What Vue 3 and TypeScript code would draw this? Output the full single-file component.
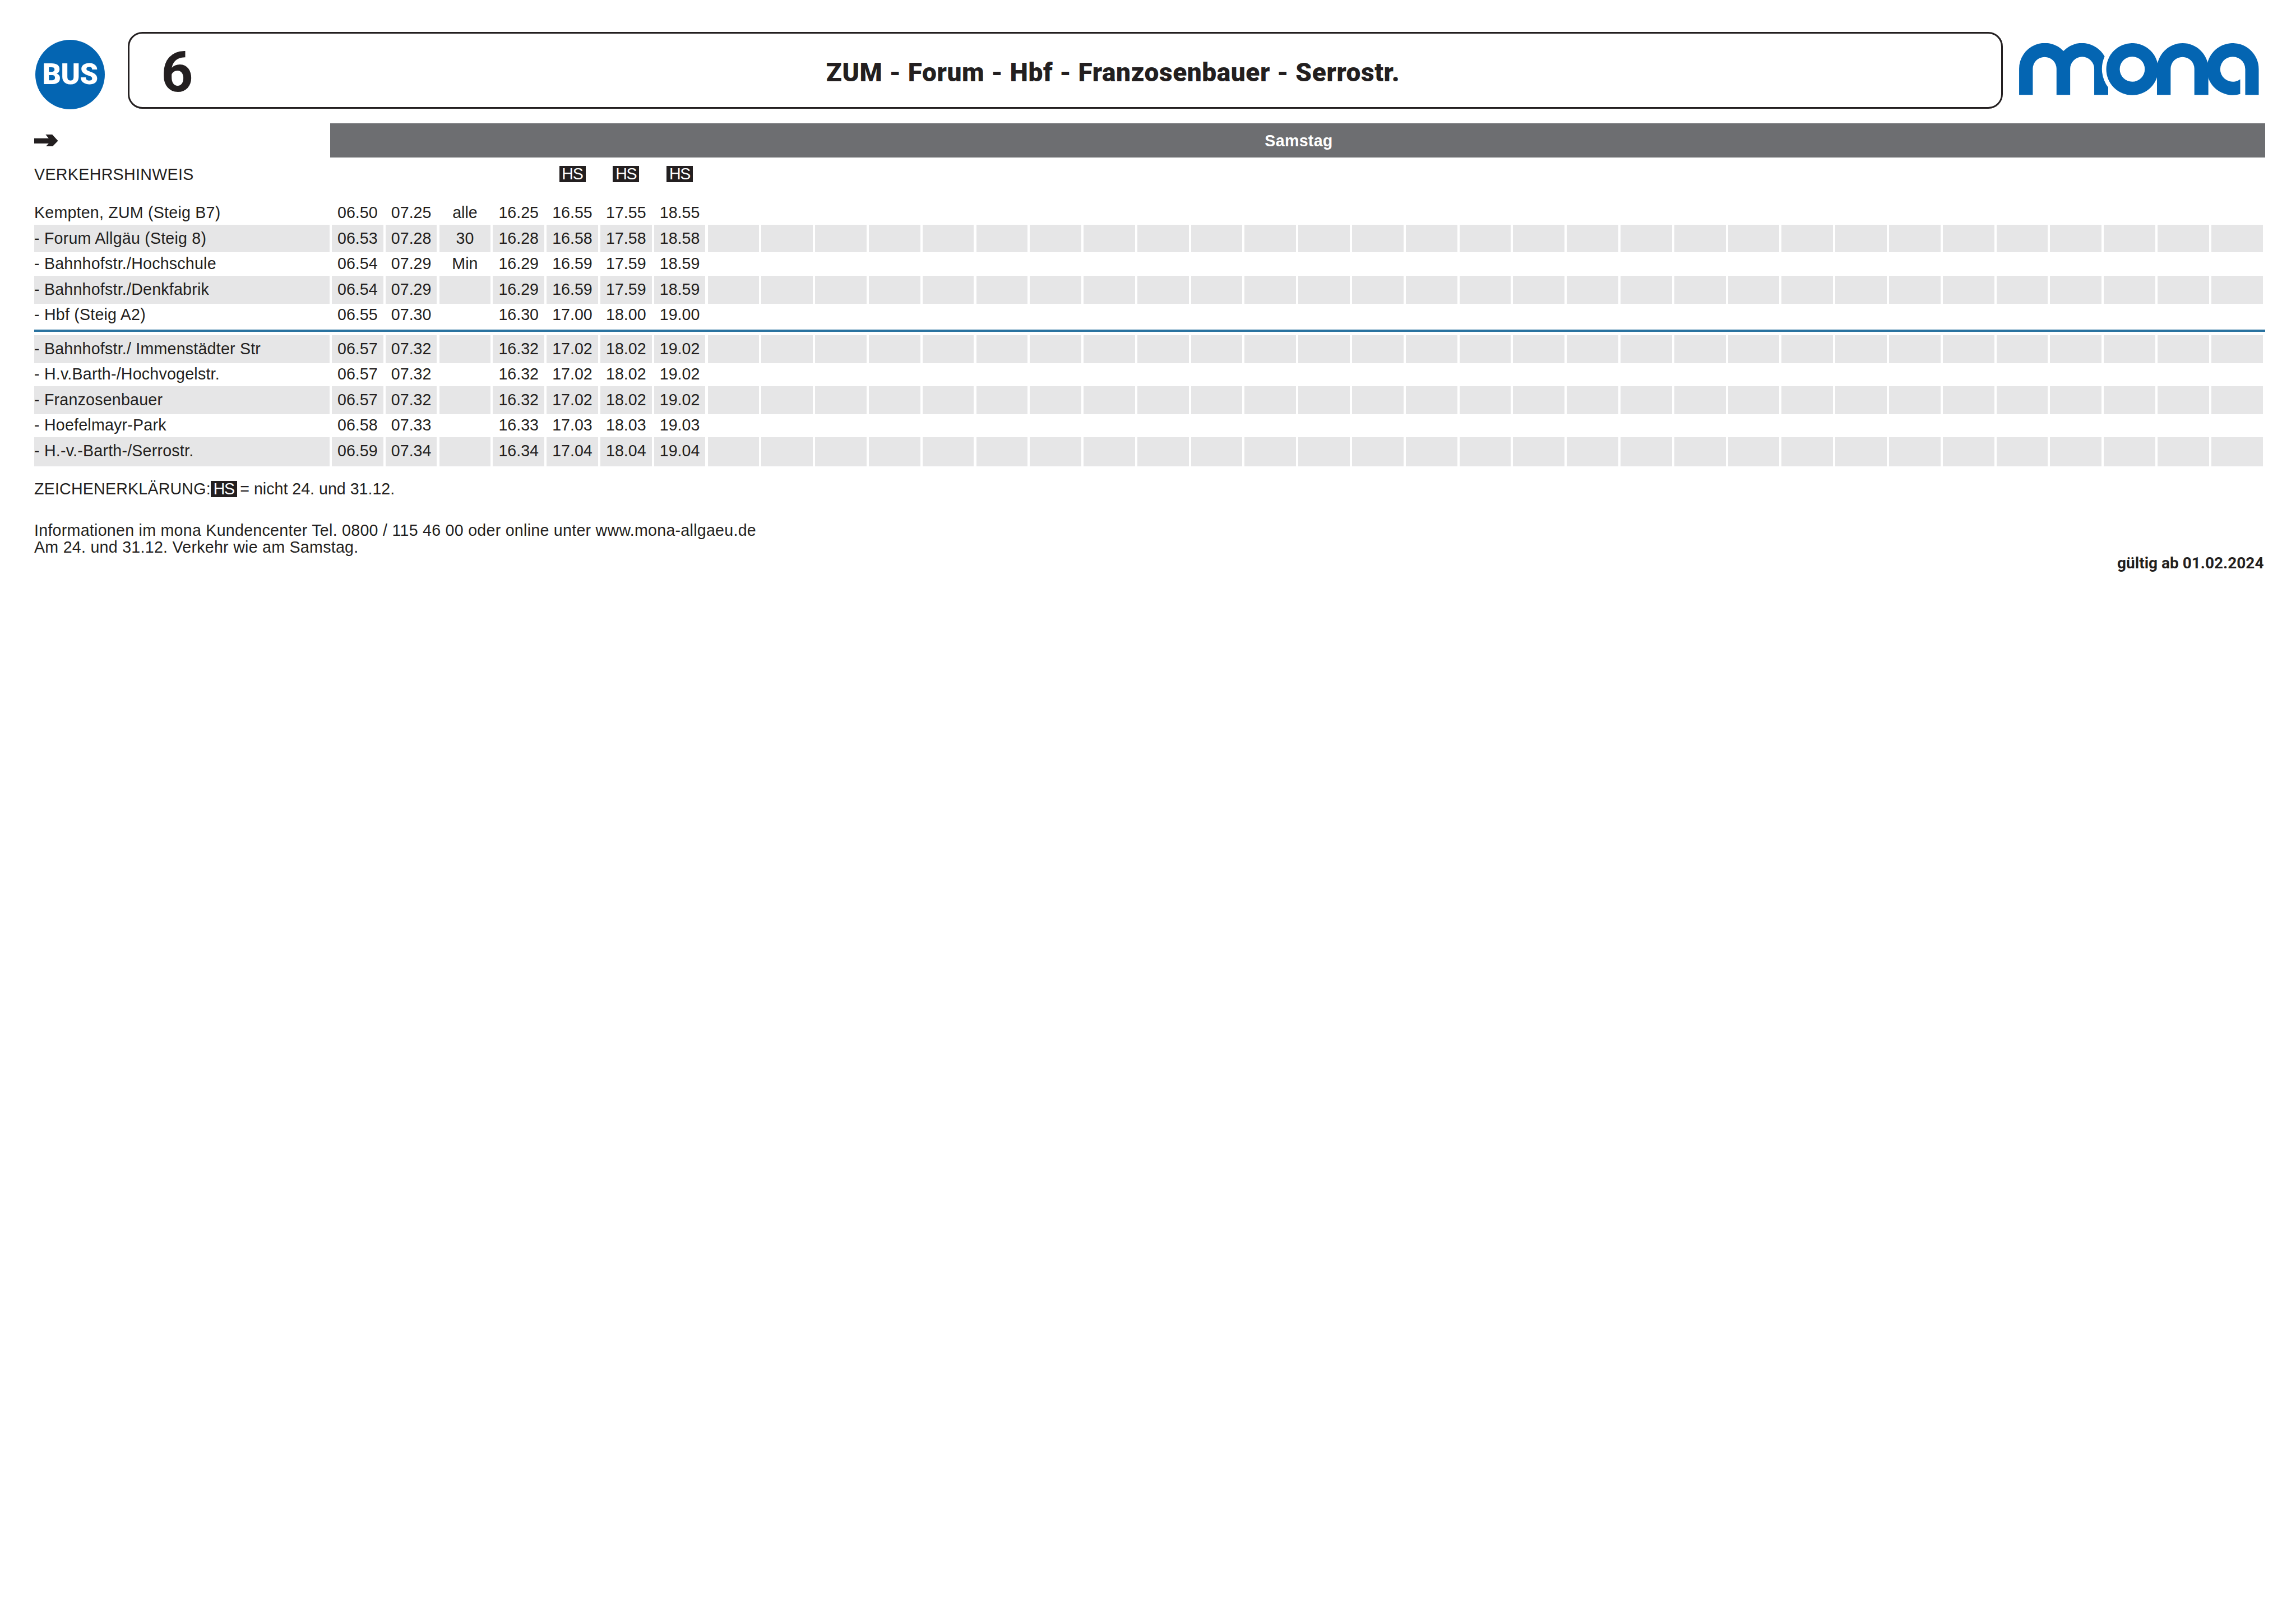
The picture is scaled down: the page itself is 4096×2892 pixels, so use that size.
<script setup lang="ts">
interface Row { name: string; times: string[]; shade: boolean; tall?: boolean }

const mk = (name: string, times: string, shade: boolean, tall = false): Row => ({
  name,
  times: times.split(',').map((t) => t.trim()),
  shade,
  tall,
})

const firstRows: Row[] = [
  mk('Kempten, ZUM (Steig B7)', '06.50,07.25,alle,16.25,16.55,17.55,18.55', false),
  mk('- Forum Allgäu (Steig 8)', '06.53,07.28,30,16.28,16.58,17.58,18.58', true),
  mk('- Bahnhofstr./Hochschule', '06.54,07.29,Min,16.29,16.59,17.59,18.59', false),
  mk('- Bahnhofstr./Denkfabrik', '06.54,07.29,,16.29,16.59,17.59,18.59', true),
  mk('- Hbf (Steig A2)', '06.55,07.30,,16.30,17.00,18.00,19.00', false),
]
const secondRows: Row[] = [
  mk('- Bahnhofstr./ Immenstädter Str', '06.57,07.32,,16.32,17.02,18.02,19.02', true),
  mk('- H.v.Barth-/Hochvogelstr.', '06.57,07.32,,16.32,17.02,18.02,19.02', false),
  mk('- Franzosenbauer', '06.57,07.32,,16.32,17.02,18.02,19.02', true),
  mk('- Hoefelmayr-Park', '06.58,07.33,,16.33,17.03,18.03,19.03', false),
  mk('- H.-v.-Barth-/Serrostr.', '06.59,07.34,,16.34,17.04,18.04,19.04', true, true),
]
const columns = Array.from({ length: 36 }, (_, i) => i)
const notes: Record<number, string> = { 4: 'HS', 5: 'HS', 6: 'HS' }
</script>

<template>
  <div class="page">
    <header class="head">
      <div class="bus">BUS</div>
      <div class="linebox">
        <div class="num">6</div>
        <div class="title">ZUM - Forum - Hbf - Franzosenbauer - Serrostr.</div>
      </div>
      <svg class="logo" viewBox="0 0 737 160" aria-label="mona">
        <path d="M0 159V79A79 79 0 0 1 136.4 24.3A79 79 0 0 1 263 41A93 93 0 0 0 274 136V159H231V79A37 37 0 0 0 157 79V159H115V79A36.5 36.5 0 0 0 42 79V159Z" />
        <path fill-rule="evenodd" d="M268 80A80 80 0 1 1 428 80A80 80 0 1 1 268 80ZM309.5 80A38.5 38.5 0 1 0 386.5 80A38.5 38.5 0 1 0 309.5 80Z" />
        <path d="M424 159V79A79 79 0 0 1 582 79V159H539V79A36.5 36.5 0 0 0 466 79V159Z" />
        <path d="M680 156.6A80 80 0 1 1 737 80V159H695.5V80A38.5 38.5 0 1 0 680 111V156.6Z" />
      </svg>
    </header>

    <div class="dayrow">
      <svg class="arrow" viewBox="0 0 73.3 37.5">
        <path d="M35 0H55.5L73.3 19.3L55.5 37.5H35L44.6 27.5H0V11.4H44.6Z" />
      </svg>
      <div class="day">Samstag</div>
    </div>

    <div class="grid noterow">
      <div class="label wide">VERKEHRSHINWEIS</div>
      <div v-for="c in columns" :key="c" class="cell">
        <span v-if="notes[c]" class="hs">{{ notes[c] }}</span>
      </div>
    </div>

    <div v-for="r in firstRows" :key="r.name" class="grid row" :class="{ shade: r.shade }">
      <div class="label">{{ r.name }}</div>
      <div v-for="c in columns" :key="c" class="cell">{{ r.times[c] }}</div>
    </div>

    <div class="rule"></div>

    <div v-for="r in secondRows" :key="r.name" class="grid row" :class="{ shade: r.shade, tall: r.tall }">
      <div class="label">{{ r.name }}</div>
      <div v-for="c in columns" :key="c" class="cell">{{ r.times[c] }}</div>
    </div>

    <div class="legend">
      <span class="key">ZEICHENERKLÄRUNG:</span><span class="hs">HS</span><span class="legend-text">= nicht 24. und 31.12.</span>
    </div>

    <div class="info">
      <div>Informationen im mona Kundencenter Tel. 0800 / 115 46 00 oder online unter www.mona-allgaeu.de</div>
      <div>Am 24. und 31.12. Verkehr wie am Samstag.</div>
    </div>

    <div class="valid">gültig ab 01.02.2024</div>
  </div>
</template>

<style scoped>
.page {
  width: 4096px;
  height: 2892px;
  box-sizing: border-box;
  padding: 56.6px 0 0 61px;
  background: #fff;
  color: #231f20;
  font-family: "Liberation Sans", Arial, sans-serif;
  font-size: 28.6px;
  overflow: hidden;
}
.head {
  display: flex;
  align-items: flex-start;
  height: 137.8px;
}
.bus {
  width: 124px;
  height: 124px;
  margin: 14.4px 41px 0 2px;
  border-radius: 50%;
  background: #0465b2;
  color: #fff;
  font-family: Roboto, sans-serif;
  font-weight: 900;
  font-size: 52px;
  line-height: 123px;
  text-align: center;
  letter-spacing: -0.6px;
  flex: none;
}
.linebox {
  display: flex;
  align-items: center;
  width: 3345px;
  height: 137.8px;
  box-sizing: border-box;
  border: 3px solid #231f20;
  border-radius: 26px;
  flex: none;
}
.num {
  width: 170px;
  padding-top: 8px;
  text-align: center;
  font-family: Roboto, sans-serif;
  font-weight: 700;
  font-size: 100px;
  line-height: 1;
  flex: none;
}
.title {
  flex: 1;
  text-align: center;
  font-family: Roboto, sans-serif;
  font-weight: 900;
  font-size: 46px;
  line-height: 1;
  padding-top: 7px;
  letter-spacing: 0.58px;
}
.logo {
  width: 427.6px;
  height: 92.8px;
  margin: 20.6px 0 0 29.4px;
  fill: #0465b2;
  flex: none;
}
.dayrow {
  display: flex;
  align-items: center;
  margin-top: 26px;
  height: 60.4px;
}
.arrow {
  width: 42.5px;
  height: 21.8px;
  fill: #231f20;
  flex: none;
}
.day {
  width: 3452px;
  height: 60.4px;
  box-sizing: border-box;
  padding-left: 4px;
  margin-left: 485.5px;
  background: #6d6e71;
  color: #fff;
  font-weight: 700;
  font-size: 28.6px;
  line-height: 63.4px;
  text-align: center;
  letter-spacing: 0.3px;
  flex: none;
}
.grid {
  display: grid;
  grid-template-columns: 526.9px repeat(36, 91.76px);
  column-gap: 4.06px;
}
.noterow {
  height: 74.2px;
  line-height: 60px;
}
.noterow .cell {
  display: flex;
  justify-content: center;
  align-items: center;
  height: 60px;
}
.row {
  height: 45.6px;
  line-height: 49.9px;
}
.row.tall {
  height: 52.2px;
}
.label,
.cell {
  min-width: 0;
  white-space: nowrap;
}
.label {
  letter-spacing: 0.22px;
}
.wide {
  letter-spacing: 0.34px;
}
.cell {
  text-align: center;
}
.shade .label,
.shade .cell {
  background: #e6e6e7;
}
.rule {
  width: 3980px;
  height: 4px;
  margin: 5.4px 0 5.3px;
  background: #2a73a0;
}
.hs {
  display: inline-block;
  width: 47px;
  height: 29.3px;
  background: #231f20;
  color: #fff;
  font-size: 28.6px;
  line-height: 29.8px;
  text-align: center;
  letter-spacing: -1.2px;
  flex: none;
}
.legend {
  display: flex;
  align-items: center;
  margin-top: 25.6px;
  height: 29.3px;
}
.key {
  letter-spacing: 0.2px;
}
.legend-text {
  margin-left: 5.5px;
}
.info {
  margin-top: 44.9px;
  line-height: 29.6px;
  letter-spacing: 0.27px;
}
.valid {
  margin-top: -1px;
  padding-right: 57.5px;
  text-align: right;
  font-family: Roboto, sans-serif;
  font-weight: 700;
  font-size: 28px;
  line-height: 30px;
}
</style>
